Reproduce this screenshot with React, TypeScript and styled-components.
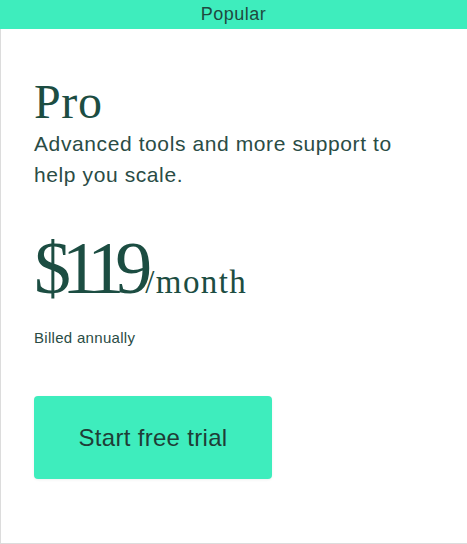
import React from "react";
import styled, { createGlobalStyle } from "styled-components";

const GlobalStyle = createGlobalStyle`
    html, body {
        margin: 0;
        padding: 0;
        background: #ffffff;
    }
`;

const Card = styled.div`
    display: flex;
    flex-direction: column;
    width: 468px;
    height: 544px;
    box-sizing: border-box;
    border-left: 1px solid #dcdcdc;
    border-right: 1px solid #dcdcdc;
    border-bottom: 1px solid #dcdcdc;
    background: #ffffff;
    font-family: "Liberation Sans", Arial, sans-serif;
    color: #234a42;
`;

const Banner = styled.div`
    display: flex;
    align-items: center;
    justify-content: center;
    height: 29px;
    background-color: #3eedbd;
    color: #1f4a40;
    font-size: 18px;
    letter-spacing: 0.5px;
    margin-left: -1px;
`;

const Body = styled.div`
    display: flex;
    flex-direction: column;
    align-items: flex-start;
    padding: 47px 33px 0 33px;
`;

const Title = styled.h2`
    margin: 0;
    font-family: "Liberation Serif", "Times New Roman", serif;
    font-weight: 400;
    font-size: 48px;
    line-height: 52px;
    letter-spacing: 0.6px;
    color: #1c4d42;
`;

const Description = styled.p`
    margin: 0;
    font-size: 21px;
    line-height: 31px;
    letter-spacing: 0.6px;
    color: #2a4c45;
`;

const PriceRow = styled.div`
    display: flex;
    align-items: baseline;
    margin-top: 38px;
    font-family: "Liberation Serif", "Times New Roman", serif;
    color: #1c4d42;
`;

const Amount = styled.span`
    font-size: 74px;
    line-height: 80px;
    letter-spacing: -9px;
    margin-right: 2px;
`;

const Period = styled.span`
    font-size: 33px;
    letter-spacing: 1.4px;
`;

const Billed = styled.div`
    margin-top: 21px;
    font-size: 15px;
    letter-spacing: 0.3px;
    color: #2a4c45;
`;

const Button = styled.a`
    display: flex;
    align-items: center;
    justify-content: center;
    margin-top: 50px;
    width: 238px;
    height: 83px;
    border-radius: 4px;
    background-color: #3eedbd;
    box-shadow: 0 1px 3px rgba(0, 0, 0, 0.06);
    color: #1f3d37;
    font-size: 24px;
    letter-spacing: 0.3px;
    text-decoration: none;
    cursor: pointer;
`;

const App: React.FC = () => {
    return (
        <>
            <GlobalStyle />
            <Card>
                <Banner>Popular</Banner>
                <Body>
                    <Title>Pro</Title>
                    <Description>
                        Advanced tools and more support to
                        <br />
                        help you scale.
                    </Description>
                    <PriceRow>
                        <Amount>$119</Amount>
                        <Period>/month</Period>
                    </PriceRow>
                    <Billed>Billed annually</Billed>
                    <Button>Start free trial</Button>
                </Body>
            </Card>
        </>
    );
};

export default App;
